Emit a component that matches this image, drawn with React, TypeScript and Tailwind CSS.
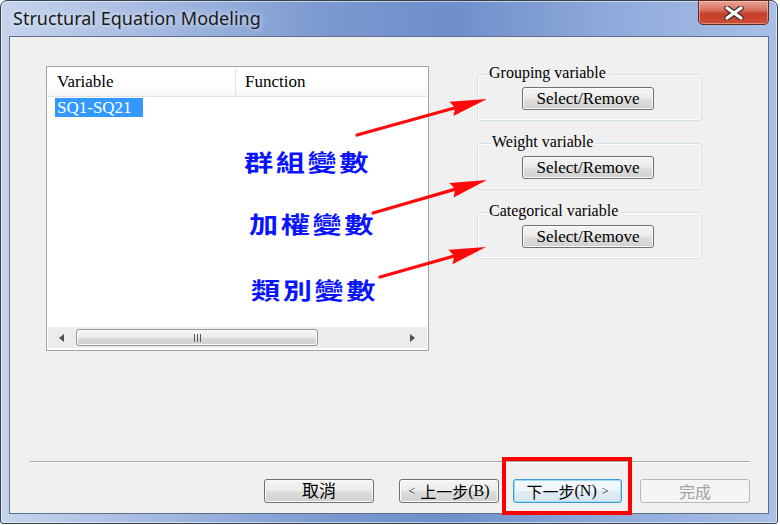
import React from "react";

function Arrow({ x1, y1, x2, y2 }: { x1: number; y1: number; x2: number; y2: number }) {
  const dx = x2 - x1;
  const dy = y2 - y1;
  const L = Math.hypot(dx, dy);
  const ux = dx / L;
  const uy = dy / L;
  const px = -uy;
  const py = ux;
  const hl = 37;
  const hw = 7.5;
  const bx = x2 - ux * hl;
  const by = y2 - uy * hl;
  const pts = [
    [x2, y2],
    [bx + px * hw, by + py * hw],
    [bx + ux * 4, by + uy * 4],
    [bx - px * hw, by - py * hw],
  ]
    .map((p) => p.join(","))
    .join(" ");
  return (
    <g>
      <line x1={x1} y1={y1} x2={bx + ux * 6} y2={by + uy * 6} stroke="#ff0a0a" strokeWidth={3.2} strokeLinecap="round" />
      <polygon points={pts} fill="#ff0a0a" />
    </g>
  );
}

function WinButton({ children, w }: { children: React.ReactNode; w: string }) {
  return (
    <div
      className={`${w} h-[24px] rounded-[3px] border border-[#707070] bg-[linear-gradient(to_bottom,#f4f4f4_0%,#ececec_48%,#dedede_52%,#d0d0d0_100%)] shadow-[inset_0_0_0_1px_#fbfbfb] flex items-center justify-center text-[17px] leading-none text-black font-['Liberation_Serif','Noto_Sans_CJK_TC',serif]`}
    >
      {children}
    </div>
  );
}

function GroupBox({ label, labelLeft }: { label: string; labelLeft: string }) {
  return (
    <div className="relative w-[225px] h-[47px] rounded-[3px] border border-[#d5dfe5] shadow-[inset_0_0_0_1px_#ffffff] pl-[44px] pt-[12px]">
      <span
        className={`absolute ${labelLeft} top-[-11px] bg-[#f0f0f0] pr-[3px] text-[16px] leading-[18px] text-black font-['Liberation_Serif',serif]`}
      >
        {label}
      </span>
      <div className="w-[132px] h-[23px] rounded-[3px] border border-[#707070] bg-[linear-gradient(to_bottom,#f4f4f4_0%,#ececec_48%,#dedede_52%,#d0d0d0_100%)] shadow-[inset_0_0_0_1px_#fbfbfb] flex items-center justify-center text-[17px] leading-none text-black font-['Liberation_Serif',serif]">
        Select/Remove
      </div>
    </div>
  );
}

export default function App() {
  return (
    <div className="relative w-[780px] h-[525px] bg-white overflow-hidden">
      {/* Window */}
      <div className="w-[778px] h-[524px] rounded-t-[7px] rounded-b-[3px] border border-[#37424f] bg-[linear-gradient(to_right,#c6d4ed_0%,#a4b9e1_20%,#7b99d0_42%,#6e8fca_58%,#8ea9db_78%,#a9bfe6_100%)] shadow-[inset_0_0_0_1px_rgba(255,255,255,0.55)] flex flex-col px-[8px] pb-[9px]">
        {/* Title bar */}
        <div className="h-[35px] flex items-start justify-between">
          <div className="pl-[4px] pt-[6px] text-[18px] leading-[22px] text-[#1b1b1b] font-['Noto_Sans',sans-serif] [text-shadow:0_0_6px_rgba(255,255,255,0.9)]">
            Structural Equation Modeling
          </div>
          <div className="mt-[-1px] w-[71px] h-[25px] rounded-b-[5px] border border-[#5b2a23] bg-[linear-gradient(to_bottom,#e9a597_0%,#d8705e_40%,#c4402a_55%,#cf4e36_100%)] shadow-[inset_0_0_0_1px_rgba(255,220,210,0.45)] flex items-center justify-center">
            <svg width="24" height="14" viewBox="0 0 24 14">
              <path d="M5 2 L19 12 M19 2 L5 12" stroke="#3b2a2a" strokeWidth="5.5" strokeLinecap="round" />
              <path d="M5 2 L19 12 M19 2 L5 12" stroke="#ffffff" strokeWidth="3.2" strokeLinecap="round" />
            </svg>
          </div>
        </div>

        {/* Client area */}
        <div className="w-[760px] h-[478px] border border-[#5e6f88] bg-[#f0f0f0] flex flex-col">
          <div className="flex items-start pl-[36px] pt-[29px]">
            {/* List box */}
            <div className="w-[383px] h-[285px] border border-[#a3a3a3] bg-white p-[1px] flex flex-col font-['Liberation_Serif',serif]">
              <div className="h-[29px] flex border-b border-[#e2e3e5] bg-[linear-gradient(to_bottom,#ffffff_0%,#ffffff_55%,#f4f5f7_100%)] text-[17px] text-black">
                <div className="w-[188px] pl-[9px] flex items-center border-r border-[#e2e3e5]">Variable</div>
                <div className="pl-[9px] flex items-center">Function</div>
              </div>
              <div className="flex-1 pl-[7px] pt-[1px]">
                <div className="w-[88px] h-[19px] bg-[#3399ff] text-white text-[17px] leading-[19px] pl-[2px]">SQ1-SQ21</div>
              </div>
              {/* Horizontal scrollbar */}
              <div className="h-[21px] mb-[1px] bg-[#ececec] flex items-center">
                <div className="w-[28px] flex items-center justify-center">
                  <svg width="6" height="8" viewBox="0 0 6 8">
                    <path d="M5 0 L0 4 L5 8 Z" fill="#505050" />
                  </svg>
                </div>
                <div className="w-[242px] h-[17px] rounded-[3px] border border-[#979797] bg-[linear-gradient(to_bottom,#f4f4f4_0%,#ebebeb_50%,#d9d9d9_51%,#d2d2d2_100%)] shadow-[inset_0_0_0_1px_#fafafa] flex items-center justify-center">
                  <svg width="9" height="8" viewBox="0 0 9 8">
                    <path d="M1.5 0 V8 M4.5 0 V8 M7.5 0 V8" stroke="#555" strokeWidth="1" />
                  </svg>
                </div>
                <div className="flex-1" />
                <div className="w-[30px] flex items-center justify-center">
                  <svg width="6" height="8" viewBox="0 0 6 8">
                    <path d="M1 0 L6 4 L1 8 Z" fill="#505050" />
                  </svg>
                </div>
              </div>
            </div>

            {/* Right column */}
            <div className="ml-[48px] mt-[8px] flex flex-col gap-[22px]">
              <GroupBox label="Grouping variable" labelLeft="left-[11px]" />
              <GroupBox label="Weight variable" labelLeft="left-[14px]" />
              <GroupBox label="Categorical variable" labelLeft="left-[11px]" />
            </div>
          </div>

          {/* Separator */}
          <div className="mt-[110px] ml-[20px] mr-[18px] h-[2px] border-t border-[#a9a9a9] border-b border-b-white" />

          {/* Bottom buttons */}
          <div className="mt-[16px] pl-[254px] flex items-center">
            <WinButton w="w-[110px]">取消</WinButton>
            <div className="ml-[25px]">
              <WinButton w="w-[100px]">
                <span className="text-[12px] mr-[5px]">&lt;</span>
                <span className="font-['Noto_Sans_CJK_TC',sans-serif] text-[16px]">上一步</span>
                <span className="text-[16px]">(B)</span>
              </WinButton>
            </div>
            <div className="ml-[14px] w-[109px] h-[24px] rounded-[3px] border border-[#3c9bd8] bg-[linear-gradient(to_bottom,#f6fafd_0%,#eef5fa_48%,#e1ecf4_52%,#d6e6f2_100%)] shadow-[inset_0_0_0_1px_#9fdcf8] flex items-center justify-center text-black leading-none font-['Liberation_Serif','Noto_Sans_CJK_TC',serif]">
              <span className="font-['Noto_Sans_CJK_TC',sans-serif] text-[16px]">下一步</span>
              <span className="text-[16px]">(N)</span>
              <span className="text-[12px] ml-[5px]">&gt;</span>
            </div>
            <div className="ml-[18px] w-[110px] h-[24px] rounded-[3px] border border-[#b5b9bc] bg-[#f4f4f4] flex items-center justify-center text-[16px] leading-none text-[#a3a3a3] font-['Noto_Sans_CJK_TC',sans-serif]">
              完成
            </div>
          </div>
        </div>
      </div>

      {/* Annotation overlays */}
      <svg className="absolute left-0 top-0 pointer-events-none" width="780" height="525" viewBox="0 0 780 525">
        <Arrow x1={357} y1={135} x2={487} y2={99} />
        <Arrow x1={373} y1={213} x2={487} y2={180} />
        <Arrow x1={380} y1={277} x2={486} y2={247} />
      </svg>
      <div className="absolute left-[244px] top-[150px] origin-left scale-x-[1.27] text-[23px] leading-[23px] tracking-[2px] font-bold text-[#0a14ff] font-['Noto_Sans_CJK_TC',sans-serif]">
        群組變數
      </div>
      <div className="absolute left-[249px] top-[212px] origin-left scale-x-[1.27] text-[23px] leading-[23px] tracking-[2px] font-bold text-[#0a14ff] font-['Noto_Sans_CJK_TC',sans-serif]">
        加權變數
      </div>
      <div className="absolute left-[251px] top-[278px] origin-left scale-x-[1.27] text-[23px] leading-[23px] tracking-[2px] font-bold text-[#0a14ff] font-['Noto_Sans_CJK_TC',sans-serif]">
        類別變數
      </div>
      <div className="absolute left-[502px] top-[457px] w-[130px] h-[58px] border-[4px] border-[#ff0000]" />
    </div>
  );
}
